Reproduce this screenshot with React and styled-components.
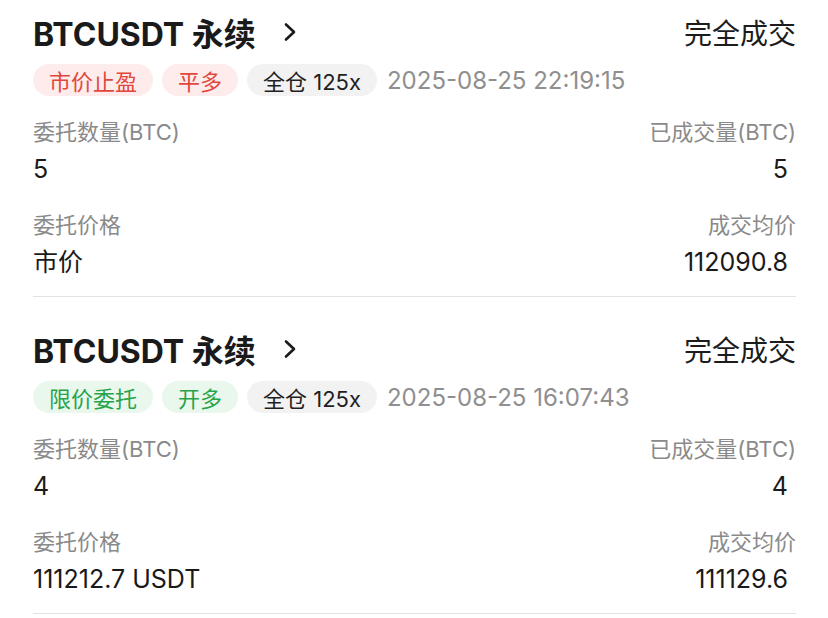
import React from 'react'
import styled, { createGlobalStyle } from 'styled-components'

const GlobalStyle = createGlobalStyle`
  body {
    margin: 0;
    background: #ffffff;
    font-family: Inter, "Noto Sans CJK SC", sans-serif;
    color: #1c1c1c;
  }
`

const List = styled.div`
  padding: 0 32px 0 33px;
`

const Card = styled.article`
  padding: 31px 0 19px;
  border-bottom: 1px solid #e3e3e3;
  &:first-child {
    padding-top: 11px;
  }
`

const TitleRow = styled.div`
  display: flex;
  align-items: center;
  justify-content: space-between;
  height: 42px;
`

const Title = styled.div`
  display: flex;
  align-items: center;
  gap: 26px;
  font-size: 32px;
  font-weight: 700;
  color: #1a1a1a;
`

const Status = styled.div`
  font-size: 28px;
  color: #1c1c1c;
`

const TagRow = styled.div`
  display: flex;
  align-items: center;
  gap: 9px;
  margin-top: 11px;
`

const tones = {
  red: { bg: '#fdeceb', fg: '#e2473c' },
  green: { bg: '#e9f7ed', fg: '#27a348' },
  gray: { bg: '#f2f2f3', fg: '#1f1f1f' },
}

const Tag = styled.span`
  display: inline-flex;
  align-items: center;
  height: 32px;
  padding: 0 16px;
  border-radius: 16px;
  font-size: 22px;
  background: ${p => tones[p.$tone].bg};
  color: ${p => tones[p.$tone].fg};
`

const Time = styled.span`
  font-size: 24px;
  color: #8f8f8f;
  margin-left: 1px;
`

const Grid = styled.div`
  display: grid;
  grid-template-columns: 1fr 1fr;
  row-gap: 26px;
  margin-top: 21px;
`

const Field = styled.div`
  display: flex;
  flex-direction: column;
  gap: 7px;
  align-items: ${p => (p.$right ? 'flex-end' : 'flex-start')};
`

const Label = styled.div`
  font-size: 22px;
  line-height: 30px;
  color: #8a8a8a;
`

const Value = styled.div`
  font-size: 25px;
  line-height: 30px;
  color: #1a1a1a;
  padding-right: ${p => (p.$right ? '8px' : '0')};
`

const Chevron = () => (
  <svg width="16" height="20" viewBox="0 0 16 20" fill="none">
    <path d="M4 2.5 L12 10 L4 17.5" stroke="#1a1a1a" strokeWidth="2.6" strokeLinecap="round" strokeLinejoin="round" />
  </svg>
)

const orders = [
  {
    type: '市价止盈',
    side: '平多',
    tone: 'red',
    time: '2025-08-25 22:19:15',
    qty: '5',
    filled: '5',
    price: '市价',
    avg: '112090.8',
  },
  {
    type: '限价委托',
    side: '开多',
    tone: 'green',
    time: '2025-08-25 16:07:43',
    qty: '4',
    filled: '4',
    price: '111212.7 USDT',
    avg: '111129.6',
  },
]

const OrderCard = ({ order }) => (
  <Card>
    <TitleRow>
      <Title>
        <span>BTCUSDT 永续</span>
        <Chevron />
      </Title>
      <Status>完全成交</Status>
    </TitleRow>
    <TagRow>
      <Tag $tone={order.tone}>{order.type}</Tag>
      <Tag $tone={order.tone}>{order.side}</Tag>
      <Tag $tone="gray">全仓 125x</Tag>
      <Time>{order.time}</Time>
    </TagRow>
    <Grid>
      <Field>
        <Label>委托数量(BTC)</Label>
        <Value>{order.qty}</Value>
      </Field>
      <Field $right>
        <Label>已成交量(BTC)</Label>
        <Value $right>{order.filled}</Value>
      </Field>
      <Field>
        <Label>委托价格</Label>
        <Value>{order.price}</Value>
      </Field>
      <Field $right>
        <Label>成交均价</Label>
        <Value $right>{order.avg}</Value>
      </Field>
    </Grid>
  </Card>
)

export default function App() {
  return (
    <>
      <GlobalStyle />
      <List>
        {orders.map((o, i) => (
          <OrderCard key={i} order={o} />
        ))}
      </List>
    </>
  )
}
